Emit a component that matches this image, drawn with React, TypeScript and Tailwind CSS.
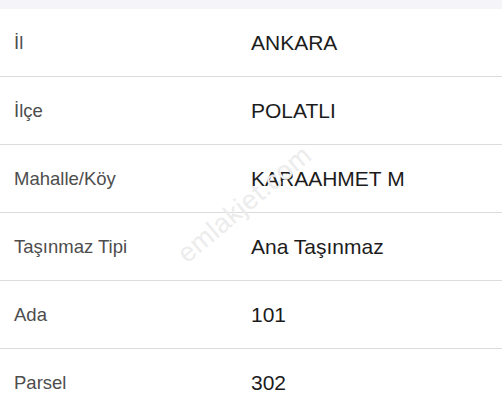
const ROWS = [
  { label: 'İl', value: 'ANKARA' },
  { label: 'İlçe', value: 'POLATLI' },
  { label: 'Mahalle/Köy', value: 'KARAAHMET M' },
  { label: 'Taşınmaz Tipi', value: 'Ana Taşınmaz' },
  { label: 'Ada', value: '101' },
  { label: 'Parsel', value: '302' },
];

export default function App() {
  return (
    <div
      className="relative w-[502px] h-[415px] overflow-hidden bg-white"
      style={{ fontFamily: '"Liberation Sans", Arial, sans-serif' }}
    >
      <div className="h-[9px] bg-[#f5f5f9]" />

      {ROWS.map((row, i) => (
        <div
          key={row.label}
          className={`flex items-center h-[68px] ${i < ROWS.length - 1 ? 'border-b border-[#dcdcdc]' : ''}`}
        >
          <div className="w-[251px] pl-[14px] text-[18.5px] text-[#4d4d4d]">{row.label}</div>
          <div className="flex-1 text-[21px] text-[#1c1c1c]">{row.value}</div>
        </div>
      ))}

      {/* watermark */}
      <div className="absolute left-[162px] top-[184px] -rotate-[40deg] text-[27px] text-[#ececec] tracking-[0.5px] pointer-events-none select-none">
        emlakjet.com
      </div>
    </div>
  );
}
